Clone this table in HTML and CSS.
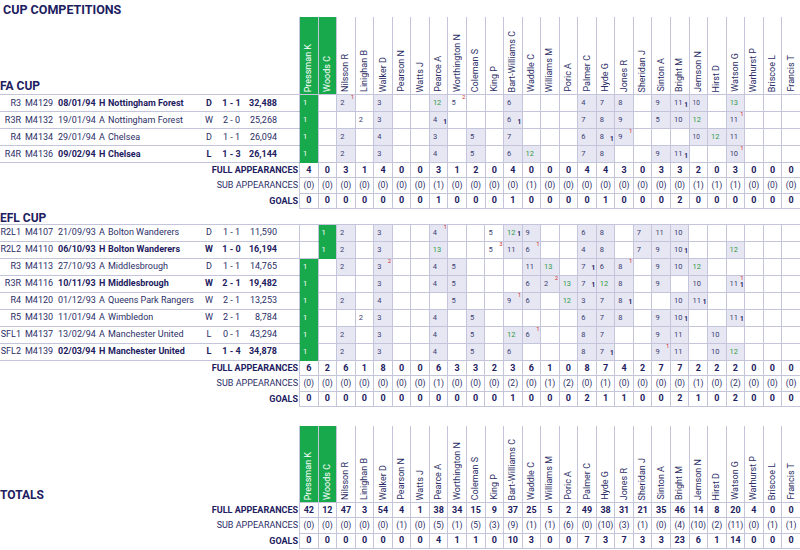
FILE: index.html
```html
<!DOCTYPE html>
<html lang="en">
<head>
<meta charset="utf-8">
<title>Cup Competitions</title>
<link rel="stylesheet" href="styles.css">
</head>
<body>
<h1 class="title">CUP COMPETITIONS</h1>

<table class="grid">
<colgroup><col class="w-rd"><col class="w-mn"><col class="w-dt"><col class="w-va"><col class="w-tm"><col class="w-rs"><col class="w-sc"><col class="w-at"><col span="27"></colgroup>
<thead>
<tr class="hdr">
<th colspan="8" class="sect">FA CUP</th>
<th class="k"><div class="nm"><span>Pressman K</span></div></th><th class="k"><div class="nm"><span>Woods C</span></div></th><th><div class="nm"><span>Nilsson R</span></div></th><th><div class="nm"><span>Linighan B</span></div></th><th><div class="nm"><span>Walker D</span></div></th><th><div class="nm"><span>Pearson N</span></div></th><th><div class="nm"><span>Watts J</span></div></th><th><div class="nm"><span>Pearce A</span></div></th><th><div class="nm"><span>Worthington N</span></div></th><th><div class="nm"><span>Coleman S</span></div></th><th><div class="nm"><span>King P</span></div></th><th><div class="nm"><span>Bart-Williams C</span></div></th><th><div class="nm"><span>Waddle C</span></div></th><th><div class="nm"><span>Williams M</span></div></th><th><div class="nm"><span>Poric A</span></div></th><th><div class="nm"><span>Palmer C</span></div></th><th><div class="nm"><span>Hyde G</span></div></th><th><div class="nm"><span>Jones R</span></div></th><th><div class="nm"><span>Sheridan J</span></div></th><th><div class="nm"><span>Sinton A</span></div></th><th><div class="nm"><span>Bright M</span></div></th><th><div class="nm"><span>Jemson N</span></div></th><th><div class="nm"><span>Hirst D</span></div></th><th><div class="nm"><span>Watson G</span></div></th><th><div class="nm"><span>Warhurst P</span></div></th><th><div class="nm"><span>Briscoe L</span></div></th><th><div class="nm"><span>Francis T</span></div></th>
</tr>
</thead>
<tbody>
<tr class="m b"><td>R3</td><td>M4129</td><td>08/01/94</td><td>H</td><td>Nottingham Forest</td><td>D</td><td>1 - 1</td><td>32,488</td><td class="k">1</td><td></td><td class="s">2<sup>1</sup></td><td></td><td class="s">3</td><td></td><td></td><td class="s u">12</td><td>5<sup>2</sup></td><td></td><td></td><td class="s">6</td><td></td><td></td><td></td><td class="s">4</td><td class="s">7</td><td class="s">8</td><td></td><td class="s">9</td><td class="s">11<sub>1</sub></td><td class="s sm">10</td><td></td><td class="s u">13</td><td></td><td></td><td></td></tr>
<tr class="m"><td>R3R</td><td>M4132</td><td>19/01/94</td><td>A</td><td>Nottingham Forest</td><td>W</td><td>2 - 0</td><td>25,268</td><td class="k">1</td><td></td><td></td><td>2</td><td class="s">3</td><td></td><td></td><td class="s">4<sub>1</sub></td><td></td><td></td><td></td><td class="s">6<sub>1</sub></td><td></td><td></td><td></td><td class="s">7</td><td class="s">8</td><td class="s">9</td><td></td><td class="s">5</td><td class="s">10</td><td class="s u">12</td><td></td><td class="s">11<sup>1</sup></td><td></td><td></td><td></td></tr>
<tr class="m"><td>R4</td><td>M4134</td><td>29/01/94</td><td>A</td><td>Chelsea</td><td>D</td><td>1 - 1</td><td>26,094</td><td class="k">1</td><td></td><td class="s">2</td><td></td><td class="s">4</td><td></td><td></td><td class="s">3</td><td></td><td class="s">5</td><td></td><td class="s">7</td><td></td><td></td><td></td><td class="s">6</td><td class="s">8<sub>1</sub></td><td class="s">9<sup>1</sup></td><td></td><td></td><td></td><td class="s sm">10</td><td class="s u">12</td><td class="s">11</td><td></td><td></td><td></td></tr>
<tr class="m b"><td>R4R</td><td>M4136</td><td>09/02/94</td><td>H</td><td>Chelsea</td><td>L</td><td>1 - 3</td><td>26,144</td><td class="k">1</td><td></td><td class="s">2</td><td></td><td class="s">3</td><td></td><td></td><td class="s">4</td><td></td><td class="s">5</td><td></td><td class="s">6</td><td class="s u">12</td><td></td><td></td><td class="s">7</td><td class="s">8</td><td></td><td></td><td class="s">9</td><td class="s">11<sub>1</sub></td><td></td><td></td><td class="s">10<sup>1</sup></td><td></td><td></td><td></td></tr>
<tr class="sum full"><th colspan="8">FULL APPEARANCES</th><td>4</td><td>0</td><td>3</td><td>1</td><td>4</td><td>0</td><td>0</td><td>3</td><td>1</td><td>2</td><td>0</td><td>4</td><td>0</td><td>0</td><td>0</td><td>4</td><td>4</td><td>3</td><td>0</td><td>3</td><td>3</td><td>2</td><td>0</td><td>3</td><td>0</td><td>0</td><td>0</td></tr>
<tr class="sum sub"><th colspan="8">SUB APPEARANCES</th><td>(0)</td><td>(0)</td><td>(0)</td><td>(0)</td><td>(0)</td><td>(0)</td><td>(0)</td><td>(1)</td><td>(0)</td><td>(0)</td><td>(0)</td><td>(0)</td><td>(1)</td><td>(0)</td><td>(0)</td><td>(0)</td><td>(0)</td><td>(0)</td><td>(0)</td><td>(0)</td><td>(0)</td><td>(1)</td><td>(1)</td><td>(1)</td><td>(0)</td><td>(0)</td><td>(0)</td></tr>
<tr class="sum"><th colspan="8">GOALS</th><td>0</td><td>0</td><td>0</td><td>0</td><td>0</td><td>0</td><td>0</td><td>1</td><td>0</td><td>0</td><td>0</td><td>1</td><td>0</td><td>0</td><td>0</td><td>0</td><td>1</td><td>0</td><td>0</td><td>0</td><td>2</td><td>0</td><td>0</td><td>0</td><td>0</td><td>0</td><td>0</td></tr>
</tbody>
</table>

<table class="grid">
<colgroup><col class="w-rd"><col class="w-mn"><col class="w-dt"><col class="w-va"><col class="w-tm"><col class="w-rs"><col class="w-sc"><col class="w-at"><col span="27"></colgroup>
<thead>
<tr class="lbl"><th colspan="35" class="sect">EFL CUP</th></tr>
</thead>
<tbody>
<tr class="m"><td>R2L1</td><td>M4107</td><td>21/09/93</td><td>A</td><td>Bolton Wanderers</td><td>D</td><td>1 - 1</td><td>11,590</td><td></td><td class="k">1</td><td class="s">2</td><td></td><td class="s">3</td><td></td><td></td><td class="s">4<sup>1</sup></td><td></td><td></td><td>5</td><td class="s u">12<sub>1</sub></td><td class="s">9</td><td></td><td></td><td class="s">6</td><td class="s">8</td><td></td><td class="s">7</td><td class="s">11</td><td class="s">10</td><td></td><td></td><td></td><td></td><td></td><td></td></tr>
<tr class="m b"><td>R2L2</td><td>M4110</td><td>06/10/93</td><td>H</td><td>Bolton Wanderers</td><td>W</td><td>1 - 0</td><td>16,194</td><td></td><td class="k">1</td><td class="s">2</td><td></td><td class="s">3</td><td></td><td></td><td class="s u">13</td><td></td><td></td><td>5<sup>3</sup></td><td class="s">11</td><td class="s">6<sup>1</sup></td><td></td><td></td><td class="s">4</td><td class="s">8</td><td></td><td class="s">7</td><td class="s">9</td><td class="s">10<sub>1</sub></td><td></td><td></td><td class="s u">12</td><td></td><td></td><td></td></tr>
<tr class="m"><td>R3</td><td>M4113</td><td>27/10/93</td><td>A</td><td>Middlesbrough</td><td>D</td><td>1 - 1</td><td>14,765</td><td class="k">1</td><td></td><td class="s">2</td><td></td><td class="s">3<sup>2</sup></td><td></td><td></td><td class="s">4</td><td class="s">5</td><td></td><td></td><td></td><td class="s">11</td><td class="s u">13</td><td></td><td class="s">7<sub>1</sub></td><td class="s">6</td><td class="s">8<sup>1</sup></td><td></td><td class="s">9</td><td class="s">10</td><td class="s u">12</td><td></td><td></td><td></td><td></td><td></td></tr>
<tr class="m b"><td>R3R</td><td>M4116</td><td>10/11/93</td><td>H</td><td>Middlesbrough</td><td>W</td><td>2 - 1</td><td>19,482</td><td class="k">1</td><td></td><td></td><td></td><td class="s">3</td><td></td><td></td><td class="s">4</td><td class="s">5</td><td></td><td></td><td></td><td class="s">6</td><td class="s">2<sup>2</sup></td><td class="s u">13</td><td class="s">7<sub>1</sub></td><td class="s u">12</td><td class="s">8</td><td></td><td class="s">9</td><td></td><td class="s">10</td><td></td><td class="s">11<sup>1</sup><sub>1</sub></td><td></td><td></td><td></td></tr>
<tr class="m"><td>R4</td><td>M4120</td><td>01/12/93</td><td>A</td><td>Queens Park Rangers</td><td>W</td><td>2 - 1</td><td>13,253</td><td class="k">1</td><td></td><td class="s">2</td><td></td><td class="s">4</td><td></td><td></td><td></td><td class="s">5</td><td></td><td></td><td class="s">9<sup>1</sup></td><td class="s">6</td><td></td><td class="s u">12</td><td class="s">3</td><td class="s">7</td><td class="s">8<sub>1</sub></td><td></td><td></td><td class="s">10</td><td class="s">11<sub>1</sub></td><td></td><td></td><td></td><td></td><td></td></tr>
<tr class="m"><td>R5</td><td>M4130</td><td>11/01/94</td><td>A</td><td>Wimbledon</td><td>W</td><td>2 - 1</td><td>8,784</td><td class="k">1</td><td></td><td></td><td>2</td><td class="s">3</td><td></td><td></td><td class="s">4</td><td></td><td class="s">5</td><td></td><td></td><td></td><td></td><td></td><td class="s">6</td><td class="s">7</td><td class="s">8</td><td></td><td class="s">9</td><td class="s">10<sub>1</sub></td><td></td><td></td><td class="s">11<sub>1</sub></td><td></td><td></td><td></td></tr>
<tr class="m"><td>SFL1</td><td>M4137</td><td>13/02/94</td><td>A</td><td>Manchester United</td><td>L</td><td>0 - 1</td><td>43,294</td><td class="k">1</td><td></td><td class="s">2</td><td></td><td class="s">3</td><td></td><td></td><td class="s">4</td><td></td><td class="s">5</td><td></td><td class="s u">12</td><td class="s">6<sup>1</sup></td><td></td><td></td><td class="s">8</td><td class="s">7</td><td></td><td></td><td class="s">9</td><td class="s">11</td><td></td><td class="s">10</td><td></td><td></td><td></td><td></td></tr>
<tr class="m b"><td>SFL2</td><td>M4139</td><td>02/03/94</td><td>H</td><td>Manchester United</td><td>L</td><td>1 - 4</td><td>34,878</td><td class="k">1</td><td></td><td class="s">2</td><td></td><td class="s">3</td><td></td><td></td><td class="s">4</td><td></td><td class="s">5</td><td></td><td class="s">6</td><td></td><td></td><td></td><td class="s">8</td><td class="s">7<sub>1</sub></td><td></td><td></td><td class="s">9<sup>1</sup></td><td class="s">11</td><td></td><td class="s">10</td><td class="s u">12</td><td></td><td></td><td></td></tr>
<tr class="sum full"><th colspan="8">FULL APPEARANCES</th><td>6</td><td>2</td><td>6</td><td>1</td><td>8</td><td>0</td><td>0</td><td>6</td><td>3</td><td>3</td><td>2</td><td>3</td><td>6</td><td>1</td><td>0</td><td>8</td><td>7</td><td>4</td><td>2</td><td>7</td><td>7</td><td>2</td><td>2</td><td>2</td><td>0</td><td>0</td><td>0</td></tr>
<tr class="sum sub"><th colspan="8">SUB APPEARANCES</th><td>(0)</td><td>(0)</td><td>(0)</td><td>(0)</td><td>(0)</td><td>(0)</td><td>(0)</td><td>(1)</td><td>(0)</td><td>(0)</td><td>(0)</td><td>(2)</td><td>(0)</td><td>(1)</td><td>(2)</td><td>(0)</td><td>(1)</td><td>(0)</td><td>(0)</td><td>(0)</td><td>(0)</td><td>(1)</td><td>(0)</td><td>(2)</td><td>(0)</td><td>(0)</td><td>(0)</td></tr>
<tr class="sum"><th colspan="8">GOALS</th><td>0</td><td>0</td><td>0</td><td>0</td><td>0</td><td>0</td><td>0</td><td>0</td><td>0</td><td>0</td><td>0</td><td>1</td><td>0</td><td>0</td><td>0</td><td>2</td><td>1</td><td>1</td><td>0</td><td>0</td><td>2</td><td>1</td><td>0</td><td>2</td><td>0</td><td>0</td><td>0</td></tr>
</tbody>
</table>

<table class="grid totals">
<colgroup><col class="w-rd"><col class="w-mn"><col class="w-dt"><col class="w-va"><col class="w-tm"><col class="w-rs"><col class="w-sc"><col class="w-at"><col span="27"></colgroup>
<thead>
<tr class="hdr">
<th colspan="8" class="sect">TOTALS</th>
<th class="k"><div class="nm"><span>Pressman K</span></div></th><th class="k"><div class="nm"><span>Woods C</span></div></th><th><div class="nm"><span>Nilsson R</span></div></th><th><div class="nm"><span>Linighan B</span></div></th><th><div class="nm"><span>Walker D</span></div></th><th><div class="nm"><span>Pearson N</span></div></th><th><div class="nm"><span>Watts J</span></div></th><th><div class="nm"><span>Pearce A</span></div></th><th><div class="nm"><span>Worthington N</span></div></th><th><div class="nm"><span>Coleman S</span></div></th><th><div class="nm"><span>King P</span></div></th><th><div class="nm"><span>Bart-Williams C</span></div></th><th><div class="nm"><span>Waddle C</span></div></th><th><div class="nm"><span>Williams M</span></div></th><th><div class="nm"><span>Poric A</span></div></th><th><div class="nm"><span>Palmer C</span></div></th><th><div class="nm"><span>Hyde G</span></div></th><th><div class="nm"><span>Jones R</span></div></th><th><div class="nm"><span>Sheridan J</span></div></th><th><div class="nm"><span>Sinton A</span></div></th><th><div class="nm"><span>Bright M</span></div></th><th><div class="nm"><span>Jemson N</span></div></th><th><div class="nm"><span>Hirst D</span></div></th><th><div class="nm"><span>Watson G</span></div></th><th><div class="nm"><span>Warhurst P</span></div></th><th><div class="nm"><span>Briscoe L</span></div></th><th><div class="nm"><span>Francis T</span></div></th>
</tr>
</thead>
<tbody>
<tr class="sum full top"><th colspan="8">FULL APPEARANCES</th><td>42</td><td>12</td><td>47</td><td>3</td><td>54</td><td>4</td><td>1</td><td>38</td><td>34</td><td>15</td><td>9</td><td>37</td><td>25</td><td>5</td><td>2</td><td>49</td><td>38</td><td>31</td><td>21</td><td>35</td><td>46</td><td>14</td><td>8</td><td>20</td><td>4</td><td>0</td><td>0</td></tr>
<tr class="sum sub"><th colspan="8">SUB APPEARANCES</th><td>(0)</td><td>(0)</td><td>(0)</td><td>(0)</td><td>(0)</td><td>(1)</td><td>(0)</td><td>(5)</td><td>(1)</td><td>(5)</td><td>(3)</td><td>(9)</td><td>(1)</td><td>(1)</td><td>(6)</td><td>(0)</td><td>(10)</td><td>(3)</td><td>(1)</td><td>(0)</td><td>(4)</td><td>(10)</td><td>(2)</td><td>(11)</td><td>(0)</td><td>(1)</td><td>(1)</td></tr>
<tr class="sum"><th colspan="8">GOALS</th><td>0</td><td>0</td><td>0</td><td>0</td><td>0</td><td>0</td><td>0</td><td>4</td><td>1</td><td>1</td><td>0</td><td>10</td><td>3</td><td>0</td><td>0</td><td>7</td><td>3</td><td>7</td><td>3</td><td>3</td><td>23</td><td>6</td><td>1</td><td>14</td><td>0</td><td>0</td><td>0</td></tr>
</tbody>
</table>
</body>
</html>
```
FILE: styles.css
```css
:root {
  --navy: #1d2060;
  --ink: #2b2e66;
  --line: #c4c5da;
  --shade: #e7e7f4;
  --green: #19a94d;
  --subgreen: #2f9a45;
  --red: #d3302c;
}

html, body {
  margin: 0;
  padding: 0;
  background: #fff;
}

body {
  width: 800px;
  font-family: Roboto, "Liberation Sans", Arial, sans-serif;
  color: var(--navy);
}

.title {
  margin: 0;
  padding-left: 3px;
  height: 17px;
  font-size: 12.5px;
  line-height: 19px;
  font-weight: 700;
  color: var(--navy);
}

.grid {
  width: 800px;
  table-layout: fixed;
  border-collapse: separate;
  border-spacing: 0;
}

.grid th,
.grid td {
  padding: 0;
}

.w-rd { width: 22px; }
.w-mn { width: 34px; }
.w-dt { width: 42px; }
.w-va { width: 9px; }
.w-tm { width: 93px; }
.w-rs { width: 18px; }
.w-sc { width: 27px; }
.w-at { width: 54px; }

/* section labels */
.sect {
  text-align: left;
  vertical-align: bottom;
  font-size: 12px;
  line-height: 12px;
  font-weight: 700;
  color: var(--navy);
  padding-left: 3px;
}

.hdr .sect {
  padding-bottom: 2px;
}

.totals .hdr .sect {
  padding-bottom: 1px;
}

.lbl .sect {
  height: 15px;
}

/* rotated player names */
.hdr th + th {
  border-left: 1px solid var(--line);
  vertical-align: bottom;
}

.nm {
  height: 77px;
  box-sizing: border-box;
  padding-bottom: 2px;
  display: flex;
  align-items: flex-end;
  justify-content: center;
}

.totals .nm {
  height: 76px;
}

.nm span {
  writing-mode: vertical-rl;
  transform: rotate(180deg);
  white-space: nowrap;
  font-size: 9px;
  line-height: 1;
  font-weight: 400;
  color: var(--ink);
}

.hdr th.k {
  background: var(--green);
}

.hdr th.k .nm span {
  color: #fff;
}

/* match rows */
.m td {
  height: 16px;
  border-bottom: 1px solid var(--line);
  font-size: 9px;
  line-height: 1;
  vertical-align: middle;
  white-space: nowrap;
  color: var(--ink);
}

tbody .m:first-child td {
  border-top: 1px solid var(--line);
}

.m td:nth-child(1) { text-align: right; padding-right: 1px; }
.m td:nth-child(2) { padding-left: 3px; }
.m td:nth-child(3) { padding-left: 2px; }
.m td:nth-child(4) { padding-left: 1px; }
.m td:nth-child(5) { padding-left: 1px; overflow: hidden; }
.m td:nth-child(6),
.m td:nth-child(7) { text-align: center; }
.m td:nth-child(8) { text-align: right; padding-right: 22px; }

.b td:nth-child(n+3):nth-child(-n+8) {
  font-weight: 700;
  color: var(--navy);
}

.m td:nth-child(n+9) {
  position: relative;
  border-left: 1px solid var(--line);
  padding-left: 3px;
  font-size: 7.5px;
  color: #3a3d70;
}

.m td.s { background: var(--shade); }
.m td.u { color: var(--subgreen); }
.m td.sm { font-size: 6.5px; }

.m td.k {
  background: var(--green);
  border-bottom-color: var(--green);
  color: #fff;
}

.m sup,
.m sub {
  position: absolute;
  right: 0.5px;
  line-height: 1;
  vertical-align: baseline;
}

.m sup {
  top: -1px;
  font-size: 6px;
  color: var(--red);
}

.m sub {
  bottom: 3px;
  font-size: 6.5px;
  font-weight: 700;
  color: var(--navy);
}

/* summary rows */
.sum th {
  text-align: right;
  padding-right: 1px;
  font-size: 9px;
  line-height: 1;
  font-weight: 700;
  color: var(--navy);
  white-space: nowrap;
  vertical-align: middle;
}

.sum td {
  height: 14.33px;
  border-left: 1px solid var(--line);
  border-bottom: 1px solid var(--line);
  text-align: center;
  vertical-align: middle;
  font-size: 9px;
  line-height: 1;
  font-weight: 700;
  color: var(--navy);
}

.sum.sub th,
.sum.sub td {
  font-weight: 400;
  color: var(--ink);
}

.sum.sub td {
  font-size: 8.5px;
}

.sum.top td {
  border-top: 1px solid var(--line);
}

.totals {
  margin-top: 19px;
}
```
